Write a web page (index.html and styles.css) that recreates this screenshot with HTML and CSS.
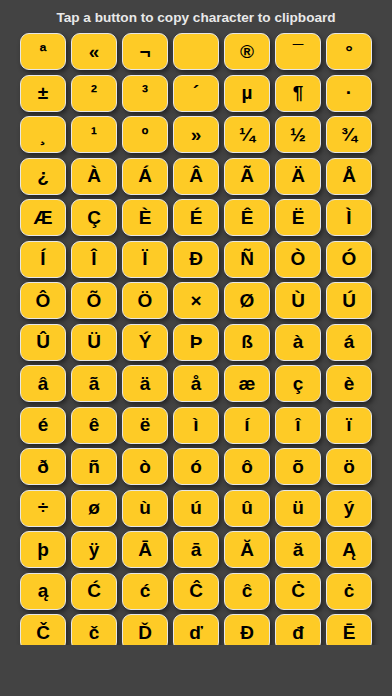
FILE: index.html
```html
<!DOCTYPE html>
<html>
<head>
<meta charset="utf-8">
<link rel="stylesheet" href="styles.css">
</head>
<body>
<div class="app">
  <div class="title">Tap a button to copy character to clipboard</div>
  <div class="scroller">
    <div class="grid">
      <button class="key">ª</button><button class="key">«</button><button class="key">¬</button><button class="key" aria-label="soft hyphen">&shy;</button><button class="key">®</button><button class="key">¯</button><button class="key">°</button>
      <button class="key">±</button><button class="key">²</button><button class="key">³</button><button class="key">´</button><button class="key">µ</button><button class="key">¶</button><button class="key">·</button>
      <button class="key">¸</button><button class="key">¹</button><button class="key">º</button><button class="key">»</button><button class="key">¼</button><button class="key">½</button><button class="key">¾</button>
      <button class="key">¿</button><button class="key">À</button><button class="key">Á</button><button class="key">Â</button><button class="key">Ã</button><button class="key">Ä</button><button class="key">Å</button>
      <button class="key">Æ</button><button class="key">Ç</button><button class="key">È</button><button class="key">É</button><button class="key">Ê</button><button class="key">Ë</button><button class="key">Ì</button>
      <button class="key">Í</button><button class="key">Î</button><button class="key">Ï</button><button class="key">Ð</button><button class="key">Ñ</button><button class="key">Ò</button><button class="key">Ó</button>
      <button class="key">Ô</button><button class="key">Õ</button><button class="key">Ö</button><button class="key">×</button><button class="key">Ø</button><button class="key">Ù</button><button class="key">Ú</button>
      <button class="key">Û</button><button class="key">Ü</button><button class="key">Ý</button><button class="key">Þ</button><button class="key">ß</button><button class="key">à</button><button class="key">á</button>
      <button class="key">â</button><button class="key">ã</button><button class="key">ä</button><button class="key">å</button><button class="key">æ</button><button class="key">ç</button><button class="key">è</button>
      <button class="key">é</button><button class="key">ê</button><button class="key">ë</button><button class="key">ì</button><button class="key">í</button><button class="key">î</button><button class="key">ï</button>
      <button class="key">ð</button><button class="key">ñ</button><button class="key">ò</button><button class="key">ó</button><button class="key">ô</button><button class="key">õ</button><button class="key">ö</button>
      <button class="key">÷</button><button class="key">ø</button><button class="key">ù</button><button class="key">ú</button><button class="key">û</button><button class="key">ü</button><button class="key">ý</button>
      <button class="key">þ</button><button class="key">ÿ</button><button class="key">Ā</button><button class="key">ā</button><button class="key">Ă</button><button class="key">ă</button><button class="key">Ą</button>
      <button class="key">ą</button><button class="key">Ć</button><button class="key">ć</button><button class="key">Ĉ</button><button class="key">ĉ</button><button class="key">Ċ</button><button class="key">ċ</button>
      <button class="key">Č</button><button class="key">č</button><button class="key">Ď</button><button class="key">ď</button><button class="key">Đ</button><button class="key">đ</button><button class="key">Ē</button>
    </div>
  </div>
</div>
</body>
</html>
```

FILE: styles.css
```css
html, body {
  margin: 0;
  padding: 0;
  background: #434343;
}
body {
  width: 392px;
  height: 696px;
  overflow: hidden;
  font-family: "Liberation Sans", Arial, sans-serif;
}
.app {
  display: flex;
  flex-direction: column;
  height: 696px;
}
.title {
  color: #e9e9e9;
  font-weight: bold;
  font-size: 13.6px;
  text-align: center;
  padding-top: 10px;
  height: 18px;
  line-height: 15px;
}
.scroller {
  height: 617px;
  overflow: hidden;
}
.grid {
  display: grid;
  grid-template-columns: repeat(7, 46px);
  grid-auto-rows: 37px;
  column-gap: 5px;
  row-gap: 4.5px;
  padding: 5px 20px 0;
}
.key {
  margin: 0;
  padding: 0;
  background: #fecb26;
  border: 1.5px solid #e6e6e6;
  border-radius: 9px;
  box-shadow: 2px 3px 5px rgba(0, 0, 0, 0.45);
  color: #000;
  font-family: "Liberation Sans", Arial, sans-serif;
  font-weight: bold;
  font-size: 19px;
  display: flex;
  align-items: center;
  justify-content: center;
  box-sizing: border-box;
}
```
